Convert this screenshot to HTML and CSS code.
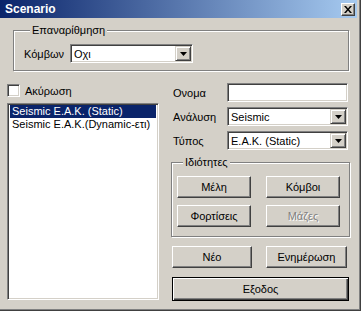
FILE: index.html
```html
<!DOCTYPE html>
<html lang="el">
<head>
    <meta charset="UTF-8" />
    <title>Scenario</title>
    <link rel="stylesheet" href="styles.css">
</head>
<body>
    <div class="window">
        <div class="titlebar">
            <span class="title">Scenario</span>
            <span class="close-btn">
                <svg width="8" height="7" viewBox="0 0 8 7">
                    <path d="M0 0h2l2 2.5L6 0h2L5 3.5 8 7H6L4 4.5 2 7H0l3-3.5z" fill="#000"/>
                </svg>
            </span>
        </div>

        <fieldset class="group group-renumber">
            <legend>Επαναρίθμηση</legend>
            <div class="renumber-row">
                <span class="renumber-label">Κόμβων</span>
                <div class="combo combo-renumber">
                    <span class="combo-text">Οχι</span>
                    <span class="combo-btn"><svg width="7" height="4" viewBox="0 0 7 4"><path d="M0 0h7L3.5 4z" fill="#000"/></svg></span>
                </div>
            </div>
        </fieldset>

        <div class="main">
            <div class="left-col">
                <div class="check-row">
                    <span class="checkbox"></span>
                    <span>Ακύρωση</span>
                </div>
                <ul class="listbox">
                    <li class="selected">Seismic E.A.K. (Static)</li>
                    <li>Seismic E.A.K.(Dynamic-ετι)</li>
                </ul>
            </div>

            <div class="right-col">
                <div class="form-row">
                    <span class="form-label">Ονομα</span>
                    <div class="textbox"></div>
                </div>
                <div class="form-row">
                    <span class="form-label">Ανάλυση</span>
                    <div class="combo">
                        <span class="combo-text">Seismic</span>
                        <span class="combo-btn"><svg width="7" height="4" viewBox="0 0 7 4"><path d="M0 0h7L3.5 4z" fill="#000"/></svg></span>
                    </div>
                </div>
                <div class="form-row">
                    <span class="form-label">Τύπος</span>
                    <div class="combo">
                        <span class="combo-text">E.A.K. (Static)</span>
                        <span class="combo-btn"><svg width="7" height="4" viewBox="0 0 7 4"><path d="M0 0h7L3.5 4z" fill="#000"/></svg></span>
                    </div>
                </div>

                <fieldset class="group group-props">
                    <legend>Ιδιότητες</legend>
                    <div class="props-grid">
                        <button class="btn">Μέλη</button>
                        <button class="btn">Κόμβοι</button>
                        <button class="btn">Φορτίσεις</button>
                        <button class="btn" disabled>Μάζες</button>
                    </div>
                </fieldset>

                <div class="action-row">
                    <button class="btn">Νέο</button>
                    <button class="btn">Ενημέρωση</button>
                </div>
                <button class="btn btn-default">Εξοδος</button>
            </div>
        </div>
    </div>
</body>
</html>
```

FILE: styles.css
```css
body {
    margin: 0;
    background: #d4d0c8;
}

.window {
    width: 361px;
    height: 311px;
    box-sizing: border-box;
    background: #d4d0c8;
    font-family: "Liberation Sans", Arial, sans-serif;
    font-size: 11px;
    color: #000;
    box-shadow: inset -1px -1px 0 #404040, inset -2px -2px 0 #808080;
    overflow: hidden;
}

.titlebar {
    height: 18px;
    margin-right: 4px;
    padding: 0 2px 0 5px;
    display: flex;
    align-items: center;
    justify-content: space-between;
    background: linear-gradient(to right, #0a246a, #a6caf0);
}

.title {
    color: #fff;
    font-weight: bold;
    font-size: 12px;
}

.close-btn {
    width: 14px;
    height: 13px;
    box-sizing: border-box;
    display: flex;
    align-items: center;
    justify-content: center;
    background: #d4d0c8;
    border: 1px solid;
    border-color: #fff #404040 #404040 #fff;
    box-shadow: inset -1px -1px 0 #808080;
}

/* group boxes */
.group {
    margin: 0;
    padding: 0;
    box-sizing: border-box;
    border: 1px solid #808080;
    box-shadow: 1px 1px 0 #fff, inset 1px 1px 0 #fff;
    min-width: 0;
}

.group legend {
    padding: 0 2px;
    margin-left: 6px;
    line-height: 13px;
    background: #d4d0c8;
}

.group-renumber {
    margin: 6px 0 0 13px;
    width: 336px;
    height: 47px;
    padding: 7px 0 0 10px;
}

.renumber-row {
    display: flex;
    align-items: center;
}

.renumber-label {
    width: 46px;
}

/* fields */
.combo, .textbox {
    height: 19px;
    box-sizing: border-box;
    background: #fff;
    border: 1px solid;
    border-color: #808080 #fff #fff #808080;
    box-shadow: inset 1px 1px 0 #404040, inset -1px -1px 0 #d4d0c8;
}

.combo {
    display: flex;
    align-items: center;
    justify-content: space-between;
    padding: 1px;
}

.combo-renumber {
    width: 123px;
}

.combo-text {
    padding-left: 2px;
}

.combo-btn {
    width: 16px;
    height: 15px;
    box-sizing: border-box;
    display: flex;
    align-items: center;
    justify-content: center;
    background: #d4d0c8;
    border: 1px solid;
    border-color: #d4d0c8 #404040 #404040 #d4d0c8;
    box-shadow: inset 1px 1px 0 #fff, inset -1px -1px 0 #808080;
}

/* main area */
.main {
    display: grid;
    grid-template-columns: 152px 179px;
    column-gap: 12px;
    margin: 12px 0 0 7px;
}

.check-row {
    display: flex;
    align-items: center;
    gap: 5px;
    height: 13px;
    margin-top: 1px;
}

.checkbox {
    width: 13px;
    height: 13px;
    box-sizing: border-box;
    background: #fff;
    border: 1px solid;
    border-color: #808080 #fff #fff #808080;
    box-shadow: inset 1px 1px 0 #404040, inset -1px -1px 0 #d4d0c8;
}

.listbox {
    list-style: none;
    margin: 6px 0 0;
    padding: 1px 2px;
    height: 197px;
    box-sizing: border-box;
    background: #fff;
    border: 1px solid;
    border-color: #808080 #fff #fff #808080;
    box-shadow: inset 1px 1px 0 #404040, inset -1px -1px 0 #d4d0c8;
}

.listbox li {
    height: 13px;
    line-height: 13px;
    padding-left: 2px;
    white-space: nowrap;
}

.listbox li.selected {
    background: #0a246a;
    color: #fff;
}

.right-col {
    display: flex;
    flex-direction: column;
}

.form-row {
    display: flex;
    align-items: center;
    padding-left: 2px;
    margin-bottom: 5px;
}

.form-label {
    width: 54px;
}

.form-row .combo, .form-row .textbox {
    width: 121px;
}

/* buttons */
.btn {
    height: 22px;
    margin: 0;
    padding: 0;
    box-sizing: border-box;
    font-family: inherit;
    font-size: 11px;
    color: #000;
    background: #d4d0c8;
    border: 1px solid;
    border-color: #fff #404040 #404040 #fff;
    box-shadow: inset -1px -1px 0 #808080;
}

.btn:disabled {
    color: #808080;
    text-shadow: 1px 1px 0 #fff;
}

.group-props {
    margin-top: 1px;
    height: 81px;
    padding: 7px 0 0 5px;
}

.props-grid {
    display: grid;
    grid-template-columns: 74px 74px;
    column-gap: 15px;
    row-gap: 7px;
}

.action-row {
    display: grid;
    grid-template-columns: 80px 81px;
    column-gap: 14px;
    margin: 9px 0 0 1px;
}

.btn-default {
    margin: 9px 0 0 1px;
    width: 177px;
    height: 24px;
    border: 1px solid #000;
    box-shadow: inset 1px 1px 0 #fff, inset -1px -1px 0 #404040, inset -2px -2px 0 #808080;
}
```
